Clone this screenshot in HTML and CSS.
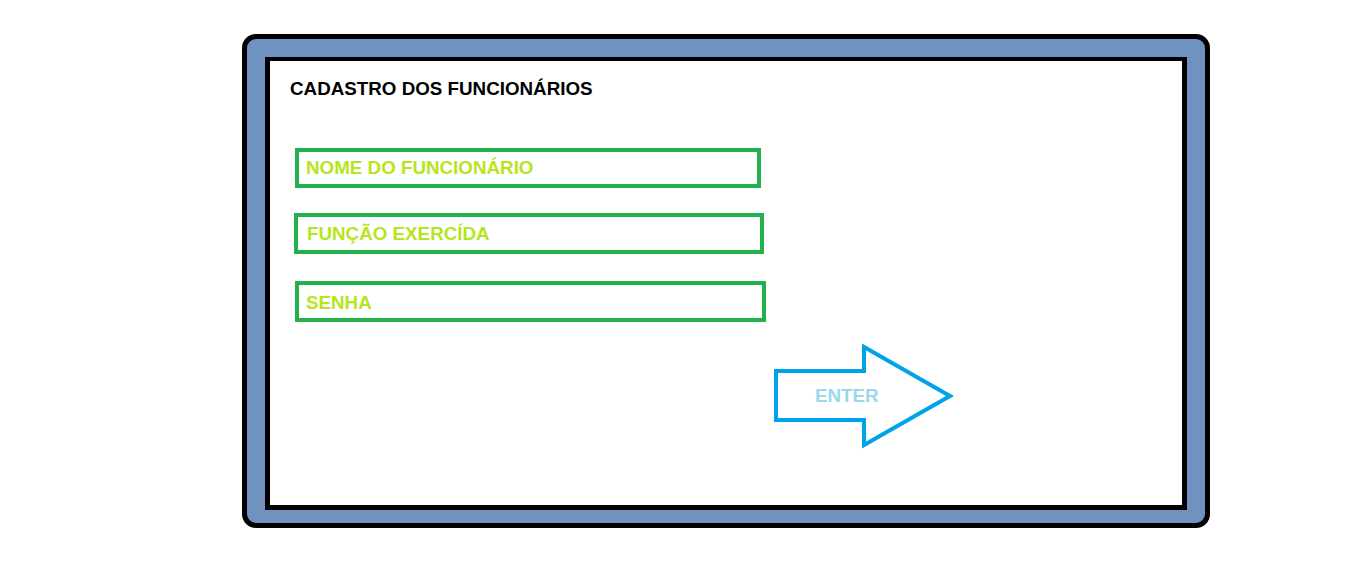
FILE: index.html
```html
<!DOCTYPE html>
<html lang="pt-BR">
<head>
<meta charset="utf-8">
<title>Cadastro dos Funcionários</title>
<link rel="stylesheet" href="styles.css">
</head>
<body>
  <div class="frame">
    <div class="panel">
      <h1 class="title">CADASTRO DOS FUNCIONÁRIOS</h1>
      <div class="fields">
        <div class="field field-name">NOME DO FUNCIONÁRIO</div>
        <div class="field field-role">FUNÇÃO EXERCÍDA</div>
        <div class="field field-pass">SENHA</div>
      </div>
      <div class="enter">
        <svg class="enter-arrow" width="184" height="107" viewBox="0 0 184 107" aria-hidden="true">
          <polygon points="4,28 92,28 92,4 178,53 92,102 92,77 4,77" fill="none" stroke="#00a2e8" stroke-width="4" stroke-linejoin="miter"/>
        </svg>
        <span class="enter-label">ENTER</span>
      </div>
    </div>
  </div>
</body>
</html>
```

FILE: styles.css
```css
html, body {
  margin: 0;
  padding: 0;
  background: #ffffff;
}

body {
  font-family: "Liberation Sans", Arial, sans-serif;
}

.frame {
  box-sizing: border-box;
  width: 968px;
  margin: 34px 0 0 242px;
  border: 5px solid #000000;
  border-radius: 14px;
  background: #7092be;
  padding: 18px 18px 13px 18px;
}

.panel {
  box-sizing: border-box;
  height: 453px;
  background: #ffffff;
  border: 5px solid #000000;
  border-top-width: 4px;
  padding: 17px 0 0 20px;
  display: flex;
  flex-direction: column;
  align-items: flex-start;
}

.title {
  margin: 0;
  font-size: 18.8px;
  line-height: 21px;
  font-weight: bold;
  color: #000000;
}

.fields {
  display: flex;
  flex-direction: column;
  margin: 49px 0 0 5px;
}

.field {
  box-sizing: border-box;
  height: 40px;
  border: 4px solid #22b14c;
  padding: 5px 8px 0 7px;
  font-size: 18.8px;
  line-height: 21px;
  font-weight: bold;
  color: #b5e61d;
}

.field-name {
  width: 466px;
}

.field-role {
  width: 470px;
  height: 41px;
  margin: 25px 0 0 -1px;
  padding-top: 6px;
  padding-left: 9px;
}

.field-pass {
  width: 471px;
  height: 41px;
  margin-top: 27px;
  padding-top: 7px;
}

.enter {
  display: grid;
  margin: 21px 0 0 482px;
}

.enter-arrow {
  grid-area: 1 / 1;
  display: block;
}

.enter-label {
  grid-area: 1 / 1;
  align-self: start;
  justify-self: start;
  margin: 42px 0 0 43px;
  font-size: 18.8px;
  line-height: 21px;
  font-weight: bold;
  color: #99d9ea;
}
```
